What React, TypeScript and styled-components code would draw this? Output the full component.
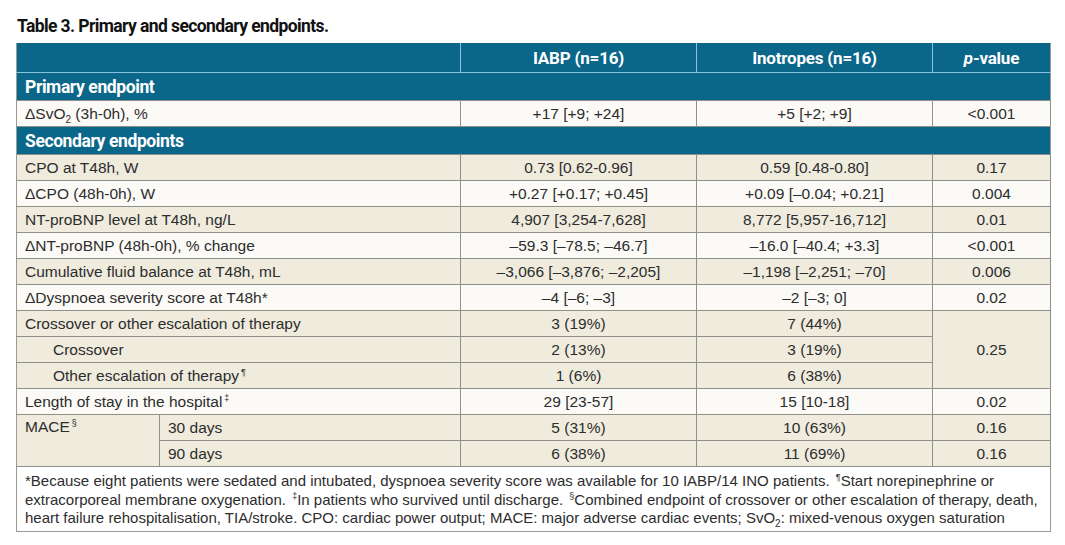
import React from "react";
import styled, { createGlobalStyle } from "styled-components";

const GlobalStyle = createGlobalStyle`
  html, body {
    margin: 0;
    padding: 0;
    background: #ffffff;
  }
`;

const HEAD_FONT = `"Liberation Sans Narrow", "Arial Narrow", Roboto, "Liberation Sans", sans-serif`;
const BODY_FONT = `"Liberation Sans", Arial, sans-serif`;

const Page = styled.div`
  padding: 16px 15px 0 16px;
  width: 1034px;
`;

const Title = styled.h1`
  margin: 0 0 7px 1px;
  font-family: ${HEAD_FONT};
  font-weight: 700;
  font-size: 17.5px;
  letter-spacing: -0.6px;
  line-height: 20px;
  color: #111;
`;

const Table = styled.table`
  width: 100%;
  border-collapse: collapse;
  table-layout: fixed;
  font-family: ${BODY_FONT};
  font-size: 15.5px;
  color: #2d2d2d;
  border-left: 1px solid #9a9a96;
  border-right: 1px solid #9a9a96;
`;

const HeadCell = styled.th<{ $last?: boolean }>`
  height: 29px;
  padding: 0;
  background: #0b6789;
  color: #fff;
  font-family: ${HEAD_FONT};
  font-weight: 700;
  font-size: 17px;
  letter-spacing: -0.2px;
  text-align: center;
  border-right: ${(p) => (p.$last ? "none" : "1px solid #86c3dc")};
  border-bottom: 1px solid #86c3dc;
`;

const SectionCell = styled.td`
  height: 26px;
  padding: 1px 0 0 8px;
  background: #0b6789;
  color: #fff;
  font-family: ${HEAD_FONT};
  font-weight: 700;
  font-size: 17.5px;
  letter-spacing: -0.4px;
  text-align: left;
`;

const Row = styled.tr<{ $shade?: boolean }>`
  background: ${(p) => (p.$shade ? "#efebdd" : "#fbfaf6")};
`;

const Cell = styled.td<{ $indent?: boolean; $center?: boolean }>`
  height: 25px;
  padding: 0 0 0 ${(p) => (p.$indent ? "36px" : "8px")};
  text-align: ${(p) => (p.$center ? "center" : "left")};
  vertical-align: middle;
  border: 1px solid #8f8f8b;
  border-left: none;
  white-space: nowrap;
  line-height: 20px;
`;

const ValueCell = styled(Cell).attrs({ $center: true })`
  padding: 0;
`;

const TopCell = styled(Cell)`
  vertical-align: top;
  padding-top: 2px;
`;

const Note = styled.td`
  padding: 5px 8px 3px 8px;
  background: #fff;
  border-bottom: 1px solid #9a9a96;
  font-size: 15px;
  line-height: 18.5px;
  color: #2d2d2d;
  white-space: nowrap;
`;

const Sup = styled.sup`
  font-size: 9px;
  vertical-align: 6px;
  line-height: 0;
  margin-left: 2px;
`;

const Sub = styled.sub`
  font-size: 10px;
  vertical-align: -4px;
  line-height: 0;
`;

type DataRow = {
  label: React.ReactNode;
  iabp: string;
  ino: string;
  p?: string;
  shade: boolean;
  indent?: boolean;
  pSpan?: number;
};

const secondary: DataRow[] = [
  { label: "CPO at T48h, W", iabp: "0.73 [0.62-0.96]", ino: "0.59 [0.48-0.80]", p: "0.17", shade: true },
  { label: "ΔCPO (48h-0h), W", iabp: "+0.27 [+0.17; +0.45]", ino: "+0.09 [–0.04; +0.21]", p: "0.004", shade: false },
  { label: "NT-proBNP level at T48h, ng/L", iabp: "4,907 [3,254-7,628]", ino: "8,772 [5,957-16,712]", p: "0.01", shade: true },
  { label: "ΔNT-proBNP (48h-0h), % change", iabp: "–59.3 [–78.5; –46.7]", ino: "–16.0 [–40.4; +3.3]", p: "<0.001", shade: false },
  { label: "Cumulative fluid balance at T48h, mL", iabp: "–3,066 [–3,876; –2,205]", ino: "–1,198 [–2,251; –70]", p: "0.006", shade: true },
  { label: "ΔDyspnoea severity score at T48h*", iabp: "–4 [–6; –3]", ino: "–2 [–3; 0]", p: "0.02", shade: false },
  { label: "Crossover or other escalation of therapy", iabp: "3 (19%)", ino: "7 (44%)", p: "0.25", pSpan: 3, shade: true },
  { label: "Crossover", iabp: "2 (13%)", ino: "3 (19%)", shade: true, indent: true },
  { label: <>Other escalation of therapy<Sup>¶</Sup></>, iabp: "1 (6%)", ino: "6 (38%)", shade: true, indent: true },
  { label: <>Length of stay in the hospital<Sup>‡</Sup></>, iabp: "29 [23-57]", ino: "15 [10-18]", p: "0.02", shade: false },
];

export default function App() {
  return (
    <Page>
      <GlobalStyle />
      <Title>Table 3. Primary and secondary endpoints.</Title>
      <Table>
        <colgroup>
          <col style={{ width: 143 }} />
          <col style={{ width: 301 }} />
          <col style={{ width: 236 }} />
          <col style={{ width: 236 }} />
          <col style={{ width: 118 }} />
        </colgroup>
        <thead>
          <tr>
            <HeadCell colSpan={2} />
            <HeadCell>IABP (n=16)</HeadCell>
            <HeadCell>Inotropes (n=16)</HeadCell>
            <HeadCell $last>
              <i>p</i>-value
            </HeadCell>
          </tr>
        </thead>
        <tbody>
          <tr>
            <SectionCell colSpan={5}>Primary endpoint</SectionCell>
          </tr>
          <Row>
            <Cell colSpan={2}>
              ΔSvO<Sub>2</Sub> (3h-0h), %
            </Cell>
            <ValueCell>+17 [+9; +24]</ValueCell>
            <ValueCell>+5 [+2; +9]</ValueCell>
            <ValueCell>&lt;0.001</ValueCell>
          </Row>
          <tr>
            <SectionCell colSpan={5}>Secondary endpoints</SectionCell>
          </tr>
          {secondary.map((r, i) => (
            <Row key={i} $shade={r.shade}>
              <Cell colSpan={2} $indent={r.indent}>
                {r.label}
              </Cell>
              <ValueCell>{r.iabp}</ValueCell>
              <ValueCell>{r.ino}</ValueCell>
              {r.p && <ValueCell rowSpan={r.pSpan}>{r.p}</ValueCell>}
            </Row>
          ))}
          <Row $shade>
            <TopCell rowSpan={2}>
              MACE<Sup>§</Sup>
            </TopCell>
            <Cell>30 days</Cell>
            <ValueCell>5 (31%)</ValueCell>
            <ValueCell>10 (63%)</ValueCell>
            <ValueCell>0.16</ValueCell>
          </Row>
          <Row $shade>
            <Cell>90 days</Cell>
            <ValueCell>6 (38%)</ValueCell>
            <ValueCell>11 (69%)</ValueCell>
            <ValueCell>0.16</ValueCell>
          </Row>
          <tr>
            <Note colSpan={5}>
              *Because eight patients were sedated and intubated, dyspnoea severity score was available for 10 IABP/14 INO patients. <Sup>¶</Sup>Start norepinephrine or
              <br />
              extracorporeal membrane oxygenation. <Sup>‡</Sup>In patients who survived until discharge. <Sup>§</Sup>Combined endpoint of crossover or other escalation of therapy, death,
              <br />
              heart failure rehospitalisation, TIA/stroke. CPO: cardiac power output; MACE: major adverse cardiac events; SvO<Sub>2</Sub>: mixed-venous oxygen saturation
            </Note>
          </tr>
        </tbody>
      </Table>
    </Page>
  );
}
